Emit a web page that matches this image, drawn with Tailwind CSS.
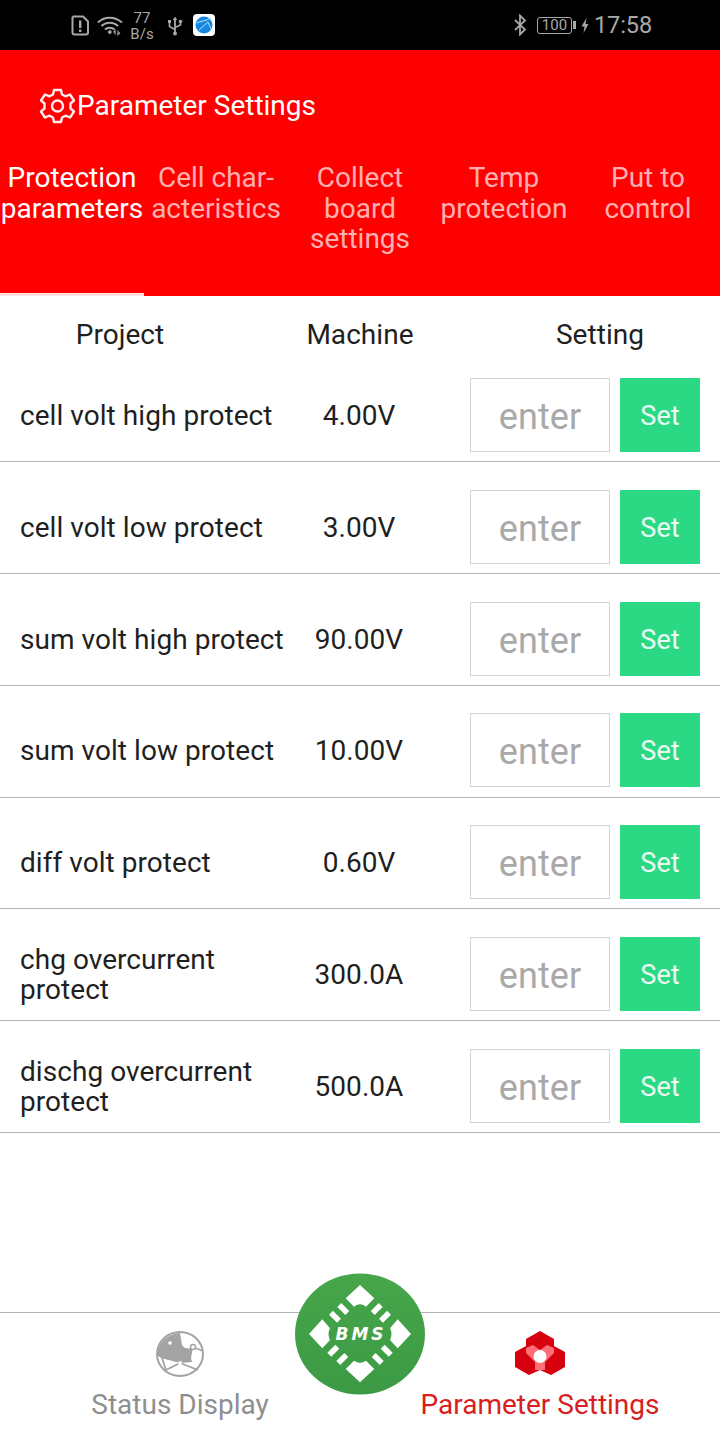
<!DOCTYPE html>
<html><head><meta charset="utf-8"><script src="https://cdn.jsdelivr.net/npm/@tailwindcss/browser@4"></script></head>
<body class="m-0 bg-white font-['Roboto',sans-serif]">
<div class="w-[720px] h-[1440px] flex flex-col overflow-hidden relative bg-white">
  <!-- status bar -->
  <div class="h-[50px] bg-black flex items-center text-[#a8a8a8] relative shrink-0">
    <div class="flex items-center pl-[71px] w-[300px]">
      <svg width="19" height="21" viewBox="0 0 19 21" fill="none"><path d="M2.5 1.5H12L17 6.5V17.5A2 2 0 0 1 15 19.5H3.5A2 2 0 0 1 1.5 17.5V2.5Z" stroke="#a8a8a8" stroke-width="2"/><path d="M9.2 5.5V13" stroke="#a8a8a8" stroke-width="2.4"/><path d="M9.2 14.5V17" stroke="#a8a8a8" stroke-width="2.4"/></svg>
      <svg class="ml-[7px]" width="26" height="21" viewBox="0 0 26 21" fill="none"><path d="M1 7.5C7 1 18 1 25 7.5" stroke="#a8a8a8" stroke-width="2"/><path d="M4.5 11C9 6.5 16.5 6.5 21 11" stroke="#a8a8a8" stroke-width="2"/><path d="M8 14.5C10.5 12 15 12 17.5 14.5" stroke="#a8a8a8" stroke-width="2"/><path d="M10.5 17L13 14.8L15 17L13 19.5Z" fill="#a8a8a8"/><path d="M18 19.5V15.5L16.5 17.5M21 15.5V19.5L23 17.5" stroke="#a8a8a8" stroke-width="1.2"/></svg>
      <div class="ml-[4px] w-[30px] text-center text-[15px] leading-[16px] mt-[1px]"><div>77</div><div>B/s</div></div>
      <svg class="ml-[10px]" width="16" height="21" viewBox="0 0 16 21" fill="none"><path d="M8 1.5L5.8 5H10.2Z" fill="#a8a8a8"/><path d="M8 4V19" stroke="#a8a8a8" stroke-width="1.8"/><path d="M2.5 7V11.5L8 14.5M13.5 7.5V10L8 12.5" stroke="#a8a8a8" stroke-width="1.6"/><rect x="1" y="5" width="3" height="3" fill="#a8a8a8"/><circle cx="13.5" cy="6.5" r="1.8" fill="#a8a8a8"/><circle cx="8" cy="18.5" r="2" fill="#a8a8a8"/></svg>
      <svg class="ml-[10px]" width="22" height="22" viewBox="0 0 22 22"><rect width="22" height="22" rx="4" fill="#fff"/><circle cx="11" cy="11" r="8.5" fill="#1488e0"/><path d="M3.5 9C8 7 13 7 18 4M6 16L15 8L18 15" stroke="#bfe3fa" stroke-width="1" fill="none"/></svg>
    </div>
    <div class="absolute right-[68px] top-0 h-[50px] flex items-center">
      <svg width="14" height="22" viewBox="0 0 14 22" fill="none"><path d="M2 6L12 15.5L7 20.5V1.5L12 6.5L2 16" stroke="#a8a8a8" stroke-width="1.8"/></svg>
      <div class="ml-[10px] w-[35px] h-[17px] border border-[#a8a8a8] rounded-[3px] text-[15px] leading-[15px] text-center">100</div>
      <div class="w-[3px] h-[8px] bg-[#a8a8a8] ml-[1px]"></div>
      <svg class="ml-[5px]" width="8" height="15" viewBox="0 0 8 15"><path d="M5.5 0L0.5 8.5H3.5L2.5 15L7.5 6H4.5Z" fill="#a8a8a8"/></svg>
      <span class="ml-[5px] text-[23.5px] leading-[50px] tracking-[-0.1px]">17:58</span>
    </div>
  </div>

  <!-- header -->
  <div class="h-[246px] bg-[#ff0000] shrink-0 flex flex-col">
    <div class="h-[110px] flex items-center pl-[38px] pt-[1px] text-white text-[28px] shrink-0">
      <svg width="39" height="36" viewBox="0 0 39 36" fill="none" class="shrink-0"><path d="M16 2H23L24 6.5L27.5 8.3L32 6.5L36 12.5L32.5 15.5V20.5L36 23.5L32 29.5L27.5 27.7L24 29.5L23 34H16L15 29.5L11.5 27.7L7 29.5L3 23.5L6.5 20.5V15.5L3 12.5L7 6.5L11.5 8.3L15 6.5Z" stroke="#ffecec" stroke-width="2.4" stroke-linejoin="round"/><circle cx="19.5" cy="18" r="5.5" stroke="#ffecec" stroke-width="2.4"/></svg>
      <span>Parameter Settings</span>
    </div>
    <div class="flex-1 flex text-[28px] leading-[30.5px] text-center text-white/70">
      <div class="w-[144px] pt-[3px] border-b-[3px] border-[#ffe0e0] text-white"><div class="whitespace-nowrap -mx-2">Protection<br>parameters</div></div>
      <div class="w-[144px] pt-[3px]"><div class="whitespace-nowrap -mx-2">Cell char-<br>acteristics</div></div>
      <div class="w-[144px] pt-[3px]">Collect<br>board<br>settings</div>
      <div class="w-[144px] pt-[3px]"><div class="whitespace-nowrap -mx-2">Temp<br>protection</div></div>
      <div class="w-[144px] pt-[3px]">Put to<br>control</div>
    </div>
  </div>

  <!-- table -->
  <div class="flex-1 text-[28px] leading-[30px] text-[#1f1f1f] tracking-[0.05px]">
    <div class="h-[54.5px] flex items-end text-center pb-[1px]">
      <div class="w-[240px]">Project</div><div class="w-[240px]">Machine</div><div class="w-[240px]">Setting</div>
    </div>
    <div class="flex items-center h-[111.75px] pt-[28.5px] pb-[10px] border-b border-[#b4b4b4] pl-[20px] pr-[20px]">
      <div class="w-[280px] pt-[2px]">cell volt high protect</div><div class="w-[118px] pt-[2px] text-center whitespace-nowrap">4.00V</div>
      <div class="ml-auto w-[140px] h-[74px] border border-[#d4d4d4] flex items-center justify-center text-[36px] text-[#a9a9a9] pt-[4px]">enter</div>
      <div class="ml-[10px] w-[80px] h-[74px] bg-[#2bd985] text-white/90 text-[27px] pt-[2px] flex items-center justify-center rounded-[1px]">Set</div>
    </div>
    <div class="flex items-center h-[111.75px] pt-[28.5px] pb-[10px] border-b border-[#b4b4b4] pl-[20px] pr-[20px]">
      <div class="w-[280px] pt-[2px]">cell volt low protect</div><div class="w-[118px] pt-[2px] text-center whitespace-nowrap">3.00V</div>
      <div class="ml-auto w-[140px] h-[74px] border border-[#d4d4d4] flex items-center justify-center text-[36px] text-[#a9a9a9] pt-[4px]">enter</div>
      <div class="ml-[10px] w-[80px] h-[74px] bg-[#2bd985] text-white/90 text-[27px] pt-[2px] flex items-center justify-center rounded-[1px]">Set</div>
    </div>
    <div class="flex items-center h-[111.75px] pt-[28.5px] pb-[10px] border-b border-[#b4b4b4] pl-[20px] pr-[20px]">
      <div class="w-[280px] pt-[2px] whitespace-nowrap">sum volt high protect</div><div class="w-[118px] pt-[2px] text-center whitespace-nowrap">90.00V</div>
      <div class="ml-auto w-[140px] h-[74px] border border-[#d4d4d4] flex items-center justify-center text-[36px] text-[#a9a9a9] pt-[4px]">enter</div>
      <div class="ml-[10px] w-[80px] h-[74px] bg-[#2bd985] text-white/90 text-[27px] pt-[2px] flex items-center justify-center rounded-[1px]">Set</div>
    </div>
    <div class="flex items-center h-[111.75px] pt-[28.5px] pb-[10px] border-b border-[#b4b4b4] pl-[20px] pr-[20px]">
      <div class="w-[280px] pt-[2px]">sum volt low protect</div><div class="w-[118px] pt-[2px] text-center whitespace-nowrap">10.00V</div>
      <div class="ml-auto w-[140px] h-[74px] border border-[#d4d4d4] flex items-center justify-center text-[36px] text-[#a9a9a9] pt-[4px]">enter</div>
      <div class="ml-[10px] w-[80px] h-[74px] bg-[#2bd985] text-white/90 text-[27px] pt-[2px] flex items-center justify-center rounded-[1px]">Set</div>
    </div>
    <div class="flex items-center h-[111.75px] pt-[28.5px] pb-[10px] border-b border-[#b4b4b4] pl-[20px] pr-[20px]">
      <div class="w-[280px] pt-[2px]">diff volt protect</div><div class="w-[118px] pt-[2px] text-center whitespace-nowrap">0.60V</div>
      <div class="ml-auto w-[140px] h-[74px] border border-[#d4d4d4] flex items-center justify-center text-[36px] text-[#a9a9a9] pt-[4px]">enter</div>
      <div class="ml-[10px] w-[80px] h-[74px] bg-[#2bd985] text-white/90 text-[27px] pt-[2px] flex items-center justify-center rounded-[1px]">Set</div>
    </div>
    <div class="flex items-center h-[111.75px] pt-[28.5px] pb-[10px] border-b border-[#b4b4b4] pl-[20px] pr-[20px]">
      <div class="w-[280px] pt-[2px]">chg overcurrent<br>protect</div><div class="w-[118px] pt-[2px] text-center whitespace-nowrap">300.0A</div>
      <div class="ml-auto w-[140px] h-[74px] border border-[#d4d4d4] flex items-center justify-center text-[36px] text-[#a9a9a9] pt-[4px]">enter</div>
      <div class="ml-[10px] w-[80px] h-[74px] bg-[#2bd985] text-white/90 text-[27px] pt-[2px] flex items-center justify-center rounded-[1px]">Set</div>
    </div>
    <div class="flex items-center h-[111.75px] pt-[28.5px] pb-[10px] border-b border-[#b4b4b4] pl-[20px] pr-[20px]">
      <div class="w-[280px] pt-[2px]">dischg overcurrent<br>protect</div><div class="w-[118px] pt-[2px] text-center whitespace-nowrap">500.0A</div>
      <div class="ml-auto w-[140px] h-[74px] border border-[#d4d4d4] flex items-center justify-center text-[36px] text-[#a9a9a9] pt-[4px]">enter</div>
      <div class="ml-[10px] w-[80px] h-[74px] bg-[#2bd985] text-white/90 text-[27px] pt-[2px] flex items-center justify-center rounded-[1px]">Set</div>
    </div>
  </div>

  <!-- bottom nav -->
  <div class="h-[128px] border-t border-[#b4b4b4] flex shrink-0 relative bg-white text-[28px]">
    <div class="w-[360px] flex flex-col items-center pt-[18px] text-[#8f8f8f]">
      <svg width="50" height="46" viewBox="-1 0 50 46"><ellipse cx="24" cy="23" rx="23" ry="22" fill="#fff" stroke="#a3a3a3" stroke-width="2"/><path d="M1 24A24 23 0 0 1 24 2L26 14Q30 20 37 16L35 27L36 31L24 32L5 27Z" fill="#a3a3a3"/><path d="M24 32L8 40M24 32L42 39M37 16L47 20M6 27L10 39" stroke="#a3a3a3" stroke-width="1.8" fill="none"/><circle cx="14" cy="12" r="1.8" fill="#fff"/><circle cx="37" cy="16" r="2.5" fill="#fff" stroke="#a3a3a3" stroke-width="1.4"/><circle cx="24" cy="32" r="2" fill="#fff"/></svg>
      <span class="mt-[9px] leading-[38px]">Status Display</span>
    </div>
    <div class="w-[360px] flex flex-col items-center pt-[18px] text-[#d81e1e]">
      <svg width="50" height="46" viewBox="0 0 50 46"><path d="M25 0L39 8V15L50 21V36L36 44L25 39L14 44L0 36V21L11 15V8Z" fill="#d6000f"/><path d="M11 17L18 14L25 19L32 14L39 17V22L30 31V39H20V31L11 22Z" fill="#ff6f78"/><circle cx="25" cy="25.5" r="6.5" fill="#fff"/></svg>
      <span class="mt-[9px] leading-[38px]">Parameter Settings</span>
    </div>
    <div class="absolute left-[295px] -top-[40px] w-[130px] h-[122px]">
      <svg width="130" height="122" viewBox="0 0 130 122">
        <defs><linearGradient id="g" x1="0" y1="0" x2="0" y2="1"><stop offset="0" stop-color="#47a54a"/><stop offset="1" stop-color="#3c9a45"/></linearGradient></defs>
        <ellipse cx="65" cy="61" rx="65" ry="60.5" fill="url(#g)"/>
        <path d="M65 12L79.3 25.3L71 33.7Q65 29 59 33.7L50.7 25.3Z" fill="#fff"/>
        <path d="M65 109.3L79.3 96L71 87.7Q65 92 59 87.7L50.7 96Z" fill="#fff"/>
        <path d="M14 61L27.3 46.3L35 55.3Q32 61 35 67L27.3 75.3Z" fill="#fff"/>
        <path d="M116 61L102.7 46.3L95 55.3Q98 61 95 67L102.7 75.3Z" fill="#fff"/>
        <g stroke="#fff" stroke-width="5.5">
          <path d="M44.3 32L52.3 40M36 39.7L44 47.7"/>
          <path d="M85.7 32L77.7 40M94 39.7L86 47.7"/>
          <path d="M34.3 81.7L42.3 73.7M43.3 90L51.3 82"/>
          <path d="M95.7 81.7L87.7 73.7M86.7 90L78.7 82"/>
        </g>
        <text x="66" y="66.5" text-anchor="middle" fill="#fff" font-family="DejaVu Sans" font-weight="700" font-style="italic" font-size="17" letter-spacing="3">BMS</text>
      </svg>
    </div>
  </div>
</div>
</body></html>
